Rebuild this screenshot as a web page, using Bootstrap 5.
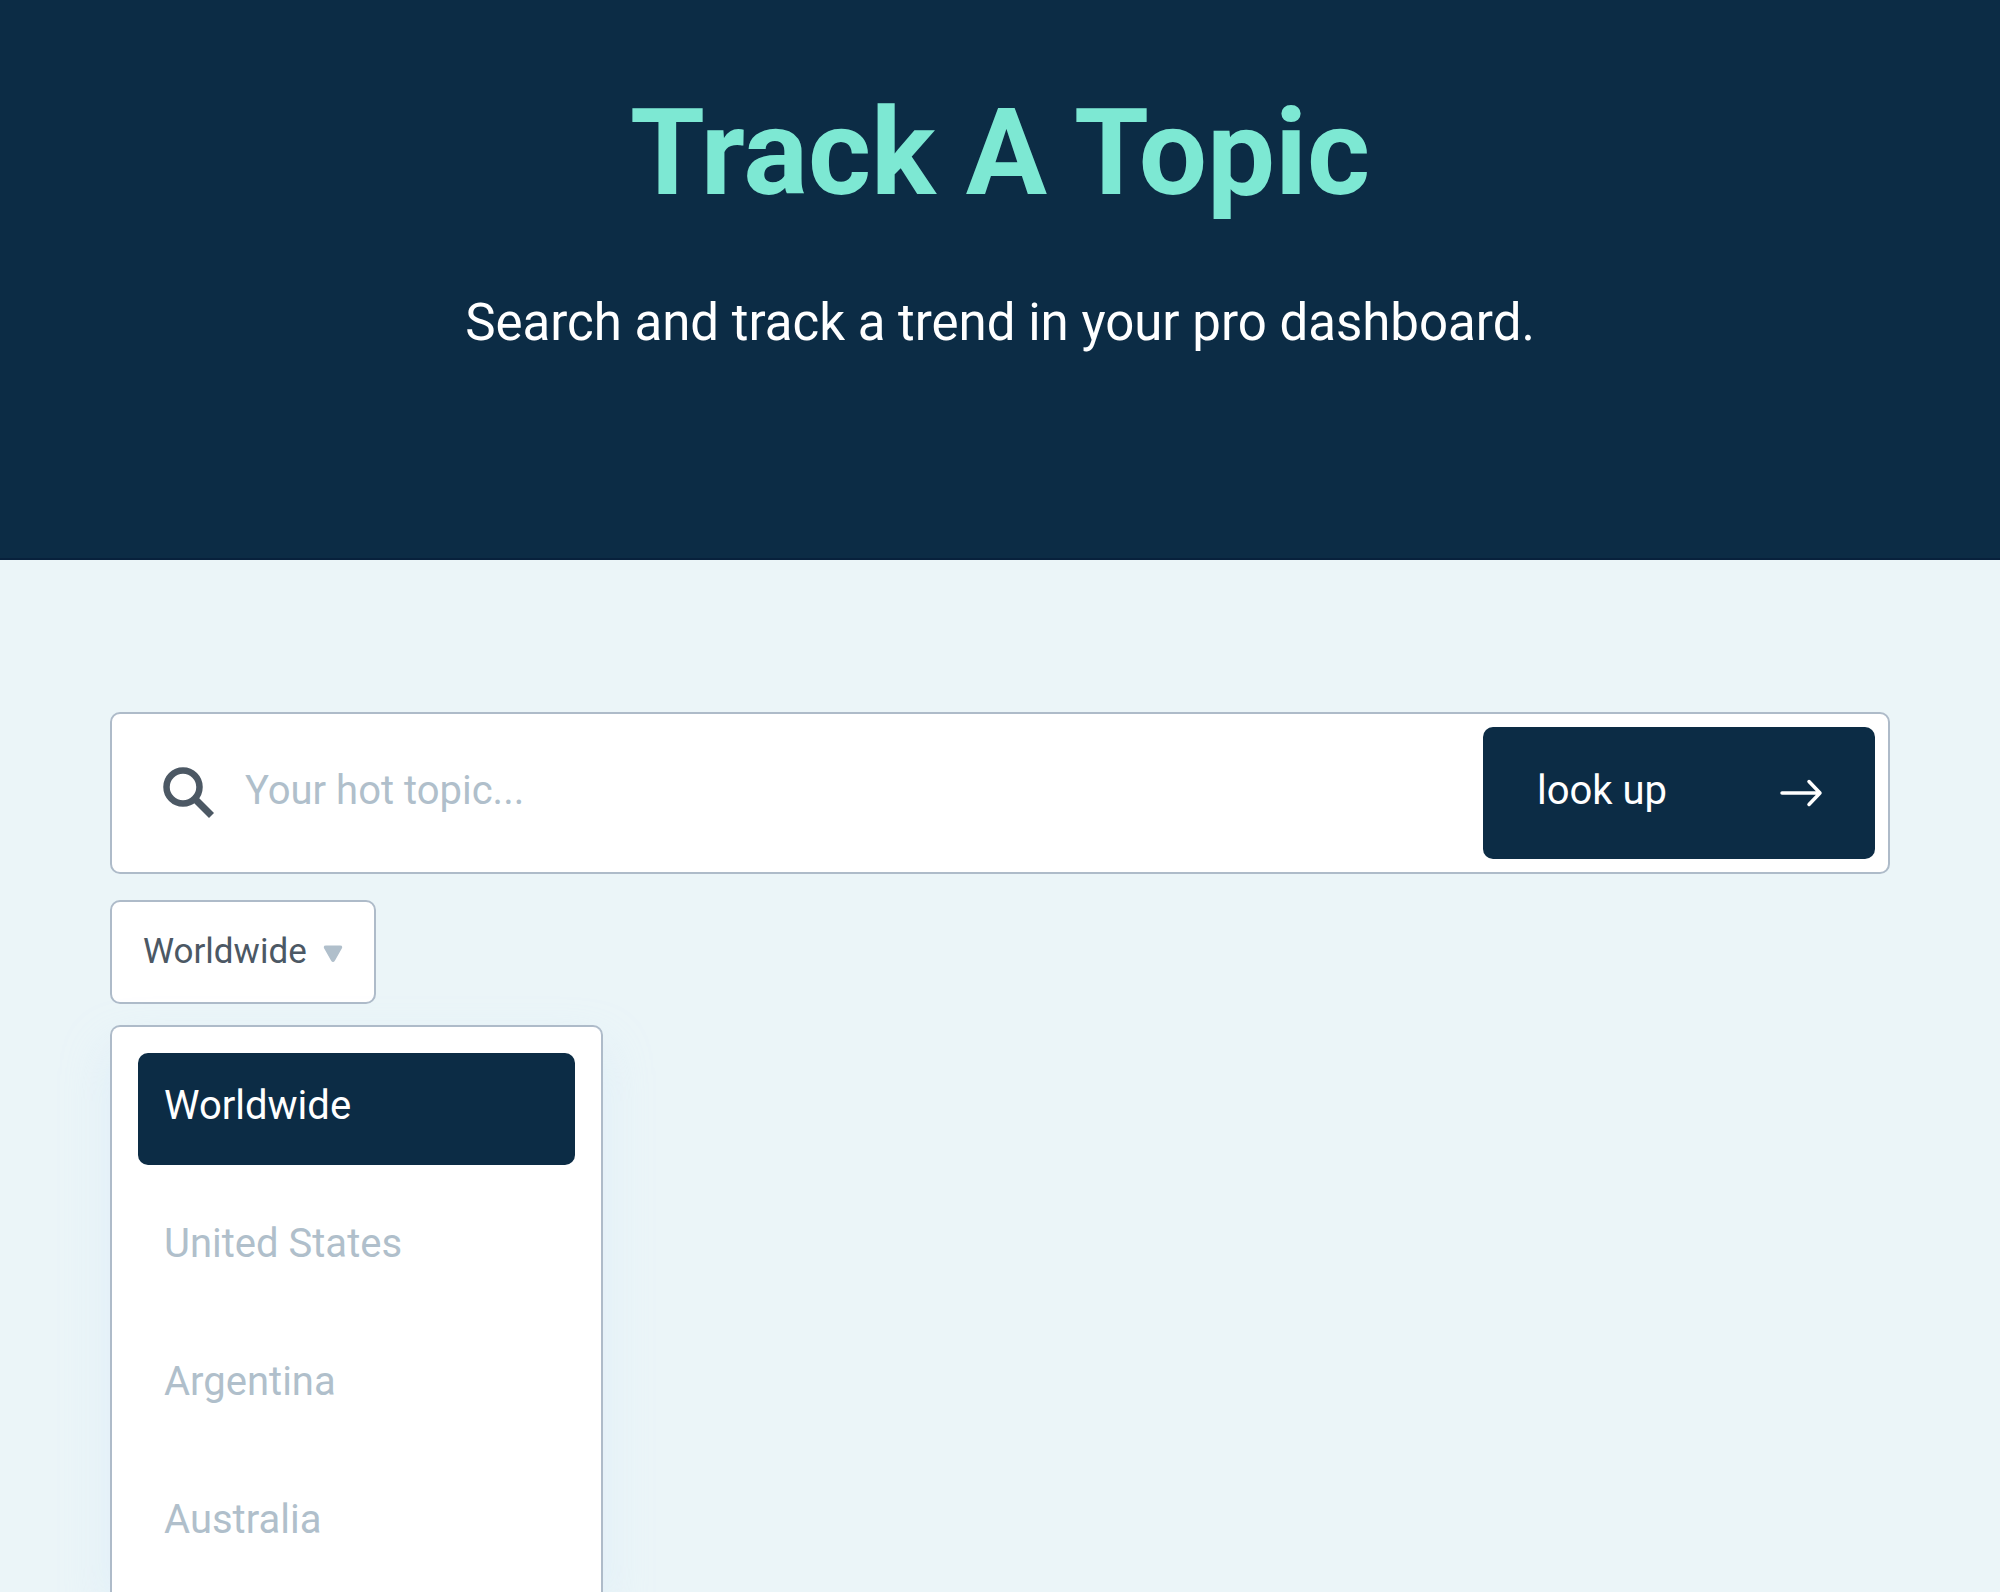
<!DOCTYPE html>
<html lang="en">
<head>
<meta charset="utf-8">
<meta name="viewport" content="width=device-width, initial-scale=1">
<title>Track A Topic</title>
<link rel="stylesheet" href="https://cdn.jsdelivr.net/npm/bootstrap@5.3.0/dist/css/bootstrap.min.css">
<style>
:root { --navy: #0c2c45; --mint: #7de8d3; --line: #aebbc9; --muted-blue: #b0bfcb; --slate: #4c5864; }
body { font-family: Roboto, "Noto Sans", sans-serif; background: #ebf5f8; }
.hero { background: var(--navy); border-bottom: 2px solid #08213c; padding: 82px 24px 200px; }
.hero-title { color: var(--mint); font-size: 121px; line-height: 142px; font-weight: 700; margin-bottom: 64px; }
.hero-text { font-size: 51px; line-height: 70px; margin: 0; }
.tracker { padding: 152px 110px 0; }
.panel { background: #fff; border: 2px solid var(--line); border-radius: 10px; }
.search-panel { padding: 13px; margin-bottom: 26px; }
.search-icon { width: 52px; height: 52px; margin-left: 38px; color: var(--slate); flex: none; }
.search-input { font-size: 40px; line-height: 60px; padding: 0 0 4px 30px; border: 0; color: var(--slate); background: transparent; }
.search-input:focus { box-shadow: none; background: transparent; }
.search-input::placeholder { color: var(--muted-blue); opacity: 1; }
.lookup-btn { width: 392px; height: 132px; padding: 0 52px 0 54px; border: 0; border-radius: 10px; background: var(--navy); color: #fff; font-size: 40px; line-height: 60px; flex: none; }
.lookup-btn:hover { background: #163a58; color: #fff; }
.lookup-btn span { padding-bottom: 4px; }
.region-btn { height: 104px; padding: 0 31px; color: var(--slate); font-size: 35px; line-height: 50px; gap: 16px; margin-bottom: 21px; }
.region-btn svg { margin-top: 4px; }
.region-menu { width: 493px; padding: 26px 26px 0; gap: 26px; border-radius: 10px 10px 0 0; box-shadow: 0 24px 48px rgba(200, 225, 250, .35); }
.region-item { height: 112px; padding: 0 26px 6px; border-radius: 10px; color: var(--muted-blue); font-size: 40px; line-height: 60px; flex: none; }
.region-item.active { background: var(--navy); color: #fff; }
</style>
</head>
<body class="d-flex flex-column min-vh-100">
<header class="hero text-center">
  <h1 class="hero-title">Track A Topic</h1>
  <p class="hero-text text-white">Search and track a trend in your pro dashboard.</p>
</header>
<main class="tracker flex-grow-1 d-flex flex-column align-items-start overflow-hidden">
  <form class="panel search-panel w-100 d-flex align-items-center" role="search">
    <svg class="search-icon" viewBox="0 0 52 52" fill="none" stroke="currentColor" aria-hidden="true"><circle cx="20" cy="20" r="16.500" stroke-width="6.500"/><path d="M31 31 L48.500 48.500" stroke-width="7"/></svg>
    <input class="form-control search-input" id="topic" type="text" placeholder="Your hot topic..." aria-label="Your hot topic">
    <button class="btn lookup-btn d-flex align-items-center justify-content-between" type="submit">
      <span>look up</span>
      <svg width="44" height="30" viewBox="0 0 44 30" fill="none" stroke="currentColor" stroke-width="3.500" stroke-linecap="round" stroke-linejoin="round" aria-hidden="true"><path d="M3 15H41M30 3.500L41 15L30 26.500"/></svg>
    </button>
  </form>
  <button class="panel region-btn d-flex align-items-center" type="button" aria-haspopup="true" aria-expanded="true" aria-controls="regions">
    <span>Worldwide</span>
    <svg width="20" height="18" viewBox="0 0 20 18" fill="#b0bfcb" aria-hidden="true"><path d="M3 0.500H17Q20.500 0.500 18.500 4L12 15.500Q10 18.500 8 15.500L1.500 4Q-0.500 0.500 3 0.500Z"/></svg>
  </button>
  <nav class="panel region-menu border-bottom-0 flex-grow-1 d-flex flex-column" id="regions" aria-label="Region">
    <a class="region-item active d-flex align-items-center text-decoration-none" href="#worldwide" aria-current="true">Worldwide</a>
    <a class="region-item d-flex align-items-center text-decoration-none" href="#us">United States</a>
    <a class="region-item d-flex align-items-center text-decoration-none" href="#ar">Argentina</a>
    <a class="region-item d-flex align-items-center text-decoration-none" href="#au">Australia</a>
  </nav>
</main>
<script src="https://cdn.jsdelivr.net/npm/bootstrap@5.3.0/dist/js/bootstrap.bundle.min.js"></script>
</body>
</html>
